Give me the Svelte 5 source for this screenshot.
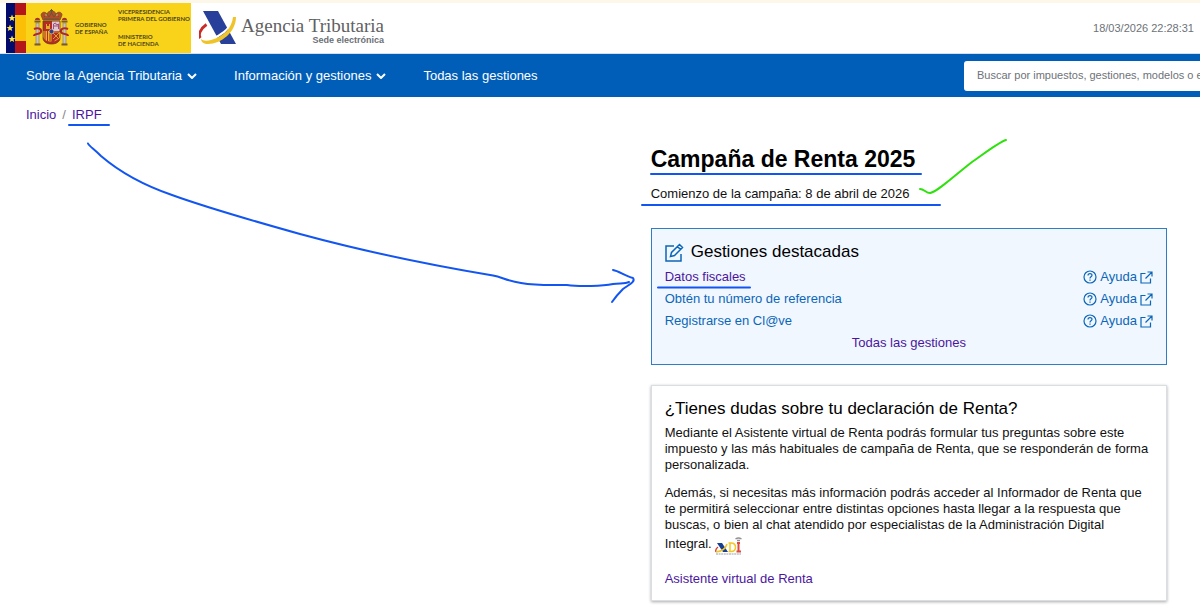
<script>
  const tasks = [
    { label: 'Datos fiscales', visited: true },
    { label: 'Obtén tu número de referencia', visited: false },
    { label: 'Registrarse en Cl@ve', visited: false }
  ];
  const stars = [[12, 15], [10, 25], [12, 36]];
</script>

<div class="page">
  <header class="top">
    <a class="brand gov" href="#gobierno">
      <svg class="crest" width="66" height="50" viewBox="0 0 66 50" aria-hidden="true">
        <rect width="9" height="50" fill="#020a6c" />
        <rect x="9" width="11" height="50" fill="#b31518" />
        <rect x="9" y="12" width="11" height="26" fill="#fcbf08" />
        {#each stars as [x, y]}
          <path transform="translate({x - 6} {y})" fill="#ffe94a" d="M0-3.6 1-1.1 3.5-1 1.5.6 2.2 3.1 0 1.7-2.2 3.1-1.5.6-3.5-1-1-1.1Z" />
        {/each}
        <g stroke-linejoin="round">
          <path d="M30 20h3v21h-3zM57 20h3v21h-3z" fill="#c9c3b4" stroke="#80766a" stroke-width=".6" />
          <path d="M28.5 18.5h6M55.500 18.500h6M28.500 41.500h6M55.500 41.500h6" stroke="#7d5a2a" stroke-width="2" />
          <path d="M29 17c0-3 5-3 5 0zM56 17c0-3 5-3 5 0z" fill="#a8322c" />
          <path d="M28 26c4-2 8 0 7 3s-7 1-7 4M62 26c-4-2-8 0-7 3s7 1 7 4" fill="none" stroke="#b52720" stroke-width="2" />
          <path d="M37 18h17v17c0 8-17 8-17 0z" fill="#b52b25" stroke="#704020" stroke-width=".8" />
          <path d="M46 18.500h7.500v9.500h-7.500z" fill="#dccbd2" />
          <path d="M47.500 26v-5l2-1 1 2 2-1v5M48 23h4" fill="none" stroke="#a84c79" stroke-width="1" />
          <path d="M37.500 28h8v10.500c-4 0-8-1-8-5z" fill="#e9b823" />
          <path d="M39 28v9M41.500 28v10M44 28v10" stroke="#b42922" />
          <path d="M46.500 29h7v6l-5 3M47 30l6 6M53 30l-6 6" fill="none" stroke="#d79e2d" />
          <path d="M40 26v-5h1v2h2v-2h1v5z" fill="#e4ad27" />
          <circle cx="45.500" cy="28.500" r="2.300" fill="#343e88" stroke="#d5bdab" stroke-width=".6" />
          <path d="M37 17l-2-5c1-4 5-3 6-1 1-4 8-4 9 0 2-3 6-2 6 1l-2 5z" fill="#b84b27" stroke="#75501e" stroke-width=".8" />
          <path d="M38 14l3-3 2 3 2.500-4 2.500 4 2-3 3 3M38 16h15M45.500 6v5M44 7.500h3" fill="none" stroke="#5c5b3a" />
          <circle cx="40" cy="12" r=".7" fill="#edda87" />
          <circle cx="51" cy="12" r=".7" fill="#edda87" />
        </g>
      </svg>
      <span class="gov-name">GOBIERNO<br />DE ESPAÑA</span>
      <span class="ministry">
        <span>VICEPRESIDENCIA<br />PRIMERA DEL GOBIERNO</span>
        <span>MINISTERIO<br />DE HACIENDA</span>
      </span>
    </a>
    <a class="brand agency" href="#sede">
      <svg width="38" height="36" viewBox="0 0 38 36" aria-hidden="true">
        <path d="M7.500 14.500C1 19-1 25 1.500 28" fill="none" stroke="#c92c28" stroke-width="2.800" />
        <path d="M4 1h15l18 33H22z" fill="#29409a" />
        <path d="M12 29C22 26 30 19 33 11" fill="none" stroke="#fff" stroke-width="2" />
        <path d="M2 29C4 31 8 31 12 30C25 27 33 17 34 7L37 7C37 22 22 34 9 34C5 34 2 32 2 29Z" fill="#efc42b" />
      </svg>
      <span class="agency-text">
        <span class="agency-name">Agencia Tributaria</span>
        <span class="agency-sub">Sede electrónica</span>
      </span>
    </a>
    <time datetime="2026-03-18T22:28:31">18/03/2026 22:28:31</time>
  </header>

  <nav class="menu" aria-label="Principal">
    <button type="button">Sobre la Agencia Tributaria
      <svg width="10" height="6" viewBox="0 0 10 6" aria-hidden="true"><path d="M1 1l4 4 4-4" /></svg>
    </button>
    <button type="button">Información y gestiones
      <svg width="10" height="6" viewBox="0 0 10 6" aria-hidden="true"><path d="M1 1l4 4 4-4" /></svg>
    </button>
    <a href="#gestiones">Todas las gestiones</a>
    <div class="search">
      <input type="search" aria-label="Buscar" placeholder="Buscar por impuestos, gestiones, modelos o expedientes" />
    </div>
  </nav>

  <nav class="crumbs" aria-label="Ruta">
    <a class="visited" href="#inicio">Inicio</a>
    <span>/</span>
    <a class="visited" href="#irpf">IRPF</a>
  </nav>

  <main>
    <div class="content">
      <h1>Campaña de Renta 2025</h1>
      <p class="start">Comienzo de la campaña: 8 de abril de 2026</p>

      <section class="featured">
        <h2>
          <svg width="19" height="19" viewBox="0 0 19 19" aria-hidden="true">
            <path d="M9 3H1v15h15v-7" />
            <path d="M5.500 13.500l1-4L14.500 1.500 17.500 4.500 9.500 12.500zM12.500 3.500l3 3" />
          </svg>
          Gestiones destacadas
        </h2>
        <ul>
          {#each tasks as task}
            <li>
              <a class:visited={task.visited} href="#tramite">{task.label}</a>
              <a class="help" href="#ayuda">
                <svg width="14" height="14" viewBox="0 0 14 14" aria-hidden="true">
                  <circle cx="7" cy="7" r="6" />
                  <path d="M5 5.500C5 3 9 3 9 5.300C9 6.800 7 6.800 7 8.400M7 9.600v1.200" />
                </svg>
                Ayuda
                <svg width="13" height="13" viewBox="0 0 13 13" aria-hidden="true">
                  <path d="M5.500 2.500H1v9.500h9.500V7.500M7.500 1H12v4.500M12 1L5.500 7.500" />
                </svg>
              </a>
            </li>
          {/each}
        </ul>
        <a class="all visited" href="#todas">Todas las gestiones</a>
      </section>

      <section class="card">
        <h2>¿Tienes dudas sobre tu declaración de Renta?</h2>
        <p>Mediante el Asistente virtual de Renta podrás formular tus preguntas sobre este impuesto y las más habituales de campaña de Renta, que se responderán de forma personalizada.</p>
        <p>
          Además, si necesitas más información podrás acceder al Informador de Renta que te permitirá seleccionar entre distintas opciones hasta llegar a la respuesta que buscas, o bien al chat atendido por especialistas de la Administración Digital Integral.
          <svg class="adi" width="27" height="20" viewBox="0 0 27 20" role="img" aria-label="ADI">
            <path d="M2 7h5l6 9H8z" fill="#173f91" />
            <path d="M3 11Q0 13 1 16" fill="none" stroke="#df3a31" stroke-width="1.400" />
            <path d="M1 16Q10 15 12 8" fill="none" stroke="#f1c52a" stroke-width="1.600" />
            <path d="M13.500 7h2.500c6 0 6 8.500 0 8.500h-2.500M15 7v8.500" fill="none" stroke="#f4c722" stroke-width="1.500" />
            <path d="M22 7h3M23.500 7v8.500M21.500 15.500h4.500" fill="none" stroke="#df493e" stroke-width="2" />
            <path d="M20.500 3q3-2 6 0M22 4.500h3" fill="none" stroke="#929292" stroke-width="1.400" />
            <path d="M1 18h25" stroke="#98a1a8" stroke-dasharray="2 .6" />
          </svg>
        </p>
        <a class="visited" href="#asistente">Asistente virtual de Renta</a>
      </section>
    </div>
  </main>

  <svg class="ink" width="1200" height="613" viewBox="0 0 1200 613" aria-hidden="true">
    <path d="M69 125h40M651 174h270M642 205h298M658 287.500h92" />
    <path d="M88 143.500C89 146 94 149 101 156C115 168 140 184 172 195C205 207 250 220 300 234C370 253 430 265 493 275.500C502 277 507 281 521 283C538 286 555 285 567 285C580 287 603 286 613 284C620 283 625 284 629 282" />
    <path d="M613 270C619 271 625 276 633 278C636 282 628 285 623 289C619 293 616 296 612 302" />
    <path class="tick" d="M920 189C924 189 926 193 930 193C937 192 949 180 972 162C985 153 999 142 1006 140" />
  </svg>
</div>

<style>
  :global(body) { margin: 0; background: #fff; }
  .page {
    position: relative;
    overflow: hidden;
    padding-bottom: 13px;
    font: 13px/16px "Liberation Sans", Arial, sans-serif;
    color: #111;
  }
  a { color: #0c66b8; text-decoration: none; }
  a.visited { color: #4b169e; }
  h1, h2, p, ul { margin: 0; padding: 0; }

  .top {
    display: flex;
    align-items: stretch;
    height: 50px;
    padding: 0 6px;
    border-top: 3px solid #fdf7e9;
    border-bottom: 1px solid #d5dfeb;
  }
  .brand { display: flex; align-items: center; }
  .gov {
    width: 185px;
    background: #f8d319;
    color: #4f4619;
    font: 700 6px/7px Lato, sans-serif;
  }
  .gov-name { width: 46px; padding-left: 3px; box-sizing: border-box; }
  .ministry {
    display: flex;
    flex-direction: column;
    justify-content: space-between;
    align-self: stretch;
    padding: 5px 0 6px;
    white-space: nowrap;
  }
  .agency { gap: 4px; padding-left: 8px; }
  .agency-text { display: flex; flex-direction: column; padding-top: 4px; }
  .agency-name { font: 19px/20px "Liberation Serif", serif; color: #5f6163; }
  .agency-sub { align-self: flex-end; font-size: 9px; line-height: 8px; font-weight: 700; color: #6b7076; }
  time { margin-left: auto; align-self: center; font-size: 11px; color: #6d7278; }

  .menu {
    display: flex;
    align-items: center;
    gap: 37px;
    height: 43px;
    padding-left: 26px;
    background: #005eb8;
  }
  .menu a, .menu button { color: #fff; white-space: nowrap; }
  .menu button {
    display: flex;
    align-items: center;
    gap: 5px;
    padding: 0;
    border: 0;
    background: none;
    font: inherit;
  }
  .menu path { fill: none; stroke: #fff; stroke-width: 2; }
  .search { width: 236px; margin-left: auto; overflow: hidden; }
  input {
    display: block;
    box-sizing: border-box;
    width: 310px;
    height: 30px;
    padding: 0 13px 2px;
    border: 0;
    border-radius: 3px;
    background: #fff;
    font: 11px "Liberation Sans", Arial, sans-serif;
  }
  input::placeholder { color: #6d7278; opacity: 1; }

  .crumbs { display: flex; gap: 6px; padding: 10px 26px 0; color: #888; }

  main {
    display: grid;
    grid-template-columns: 121fr 100fr;
    padding: 22px 33px 0 26px;
  }
  .content { grid-column: 2; }
  h1 { font-size: 23px; line-height: 28px; color: #000; }
  .start { padding: 13px 0 26px; }
  .featured {
    display: flex;
    flex-direction: column;
    padding: 13px 13px 10px;
    border: 1px solid #2f7dc5;
    background: #f0f7ff;
  }
  h2 { display: flex; align-items: center; gap: 7px; font-size: 17px; line-height: 20px; font-weight: 400; color: #000; }
  .featured svg { fill: none; stroke: #0c66b8; stroke-width: 1.5; }
  .help svg { stroke-width: 1.2; }
  ul { list-style: none; padding-top: 4px; }
  li { display: flex; justify-content: space-between; line-height: 22px; }
  .help { display: flex; align-items: center; gap: 3px; }
  .all { align-self: center; line-height: 22px; }

  .card {
    margin-top: 20px;
    padding: 13px;
    border: 1px solid #d9dee2;
    box-shadow: 0 1px 3px #0005;
  }
  .card h2 { margin-bottom: 6px; }
  .card p { margin-bottom: 12px; }
  .card p + p { margin-bottom: 15px; }
  .adi { margin-top: 3px; vertical-align: -8px; }

  .ink { position: absolute; top: 0; left: 0; pointer-events: none; }
  .ink path { fill: none; stroke: #1255f0; stroke-width: 2; stroke-linecap: round; stroke-linejoin: round; }
  .ink .tick { stroke: #2de10c; }
</style>
